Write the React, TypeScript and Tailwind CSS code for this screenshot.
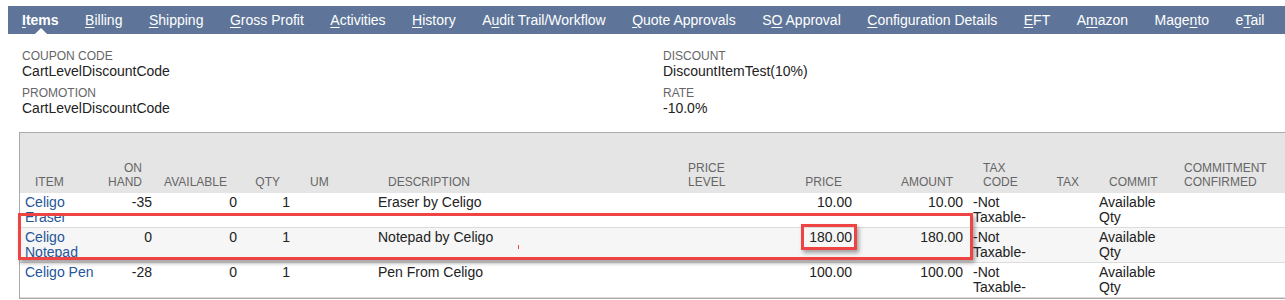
import React from 'react';

type Col = {
    label: string[];
    width: number;
    align: 'left' | 'right';
};

const cols: Col[] = [
    { label: ['ITEM'], width: 80, align: 'left' },
    { label: ['ON', 'HAND'], width: 57, align: 'right' },
    { label: ['AVAILABLE'], width: 85, align: 'right' },
    { label: ['QTY'], width: 53, align: 'right' },
    { label: ['UM'], width: 78, align: 'left' },
    { label: ['DESCRIPTION'], width: 300, align: 'left' },
    { label: ['PRICE', 'LEVEL'], width: 87, align: 'left' },
    { label: ['PRICE'], width: 97, align: 'right' },
    { label: ['AMOUNT'], width: 111, align: 'right' },
    { label: ['TAX', 'CODE'], width: 75, align: 'left' },
    { label: ['TAX'], width: 51, align: 'right' },
    { label: ['COMMIT'], width: 75, align: 'left' },
    { label: ['COMMITMENT', 'CONFIRMED'], width: 131, align: 'left' },
];

const rows = [
    { item: 'Celigo Eraser', onHand: '-35', avail: '0', qty: '1', desc: 'Eraser by Celigo', price: '10.00', amount: '10.00' },
    { item: 'Celigo Notepad', onHand: '0', avail: '0', qty: '1', desc: 'Notepad by Celigo', price: '180.00', amount: '180.00' },
    { item: 'Celigo Pen', onHand: '-28', avail: '0', qty: '1', desc: 'Pen From Celigo', price: '100.00', amount: '100.00' },
];

const tabs: { pre: string; key: string; post: string }[] = [
    { pre: '', key: 'I', post: 'tems' },
    { pre: '', key: 'B', post: 'illing' },
    { pre: '', key: 'S', post: 'hipping' },
    { pre: '', key: 'G', post: 'ross Profit' },
    { pre: '', key: 'A', post: 'ctivities' },
    { pre: '', key: 'H', post: 'istory' },
    { pre: 'A', key: 'u', post: 'dit Trail/Workflow' },
    { pre: '', key: 'Q', post: 'uote Approvals' },
    { pre: 'S', key: 'O', post: ' Approval' },
    { pre: '', key: 'C', post: 'onfiguration Details' },
    { pre: '', key: 'E', post: 'FT' },
    { pre: 'A', key: 'm', post: 'azon' },
    { pre: 'Mage', key: 'n', post: 'to' },
    { pre: 'e', key: 'T', post: 'ail' },
];

const Field = ({ label, value }: { label: string; value: string }) => (
    <div className="mb-[7px]">
        <div className="text-[12px] leading-[14px] text-[#666]">{label}</div>
        <div className="text-[14px] leading-[16px] text-[#222]">{value}</div>
    </div>
);

const Cell = ({ align, children, link }: { align: 'left' | 'right'; children?: React.ReactNode; link?: boolean }) => (
    <td
        className={`border-b border-[#dcdcdc] px-[5px] pt-[2px] pb-[2px] align-top text-[14px] leading-[15px] ${align === 'right' ? 'text-right' : 'text-left'} ${link ? 'text-[#255599]' : 'text-[#222]'}`}
    >
        {children}
    </td>
);

export default function App() {
    return (
        <div className="h-[300px] w-[1285px] overflow-hidden bg-white pt-[6px] font-['Liberation_Sans',Arial,sans-serif]">
            {/* tabs */}
            <div className="relative ml-[8px] flex h-[28px] items-center gap-[26.5px] bg-[#5e7599] pl-[14px] text-[14px] whitespace-nowrap text-white">
                {tabs.map((t, i) => (
                    <span key={i} className={i === 0 ? 'font-bold' : ''}>
                        {t.pre}
                        <span className="underline underline-offset-2">{t.key}</span>
                        {t.post}
                    </span>
                ))}
                <div className="absolute bottom-0 left-[27px] h-0 w-0 border-r-[6px] border-b-[6px] border-l-[6px] border-r-transparent border-b-white border-l-transparent" />
            </div>

            {/* fields */}
            <div className="mt-[15px] flex pl-[22px]">
                <div className="w-[641px]">
                    <Field label="COUPON CODE" value="CartLevelDiscountCode" />
                    <Field label="PROMOTION" value="CartLevelDiscountCode" />
                </div>
                <div>
                    <Field label="DISCOUNT" value="DiscountItemTest(10%)" />
                    <Field label="RATE" value="-10.0%" />
                </div>
            </div>

            {/* items table */}
            <div className="relative mt-[9px] ml-[19px] w-[1300px] border border-[#aaa]">
                <table className="table-fixed border-collapse">
                    <colgroup>
                        {cols.map((c, i) => (
                            <col key={i} style={{ width: c.width }} />
                        ))}
                    </colgroup>
                    <thead>
                        <tr className="h-[60px] bg-[#e5e5e5]">
                            {cols.map((c, i) => (
                                <th
                                    key={i}
                                    className={`pb-[4px] align-bottom text-[12px] leading-[14px] font-normal text-[#666] ${c.align === 'right' ? 'pr-[15px] text-right' : 'pl-[15px] text-left'}`}
                                >
                                    {c.label.map((l, j) => (
                                        <div key={j}>{l}</div>
                                    ))}
                                </th>
                            ))}
                        </tr>
                    </thead>
                    <tbody>
                        {rows.map((r, i) => (
                            <tr key={i} className={i === 1 ? 'bg-[#f6f6f6]' : 'bg-white'}>
                                <Cell align="left" link>
                                    {r.item}
                                </Cell>
                                <Cell align="right">{r.onHand}</Cell>
                                <Cell align="right">{r.avail}</Cell>
                                <Cell align="right">{r.qty}</Cell>
                                <Cell align="left" />
                                <Cell align="left">{r.desc}</Cell>
                                <Cell align="left" />
                                <Cell align="right">{r.price}</Cell>
                                <Cell align="right">{r.amount}</Cell>
                                <Cell align="left">
                                    <div>-Not</div>
                                    <div>Taxable-</div>
                                </Cell>
                                <Cell align="right" />
                                <Cell align="left">
                                    <div>Available</div>
                                    <div>Qty</div>
                                </Cell>
                                <Cell align="left" />
                            </tr>
                        ))}
                    </tbody>
                </table>

                {/* annotation overlay */}
                <div className="absolute top-[80px] left-[-2px] h-[47px] w-[955px] border-[3px] border-[#ef4444] shadow-[2px_3px_4px_rgba(0,0,0,0.35)]" />
                <div className="absolute top-[91px] left-[781px] h-[26px] w-[56px] border-[3px] border-[#ef4444] shadow-[2px_3px_4px_rgba(0,0,0,0.35)]" />
                <div className="absolute top-[112px] left-[498px] h-[4px] w-[1px] bg-[#ef4444]" />
            </div>
        </div>
    );
}
